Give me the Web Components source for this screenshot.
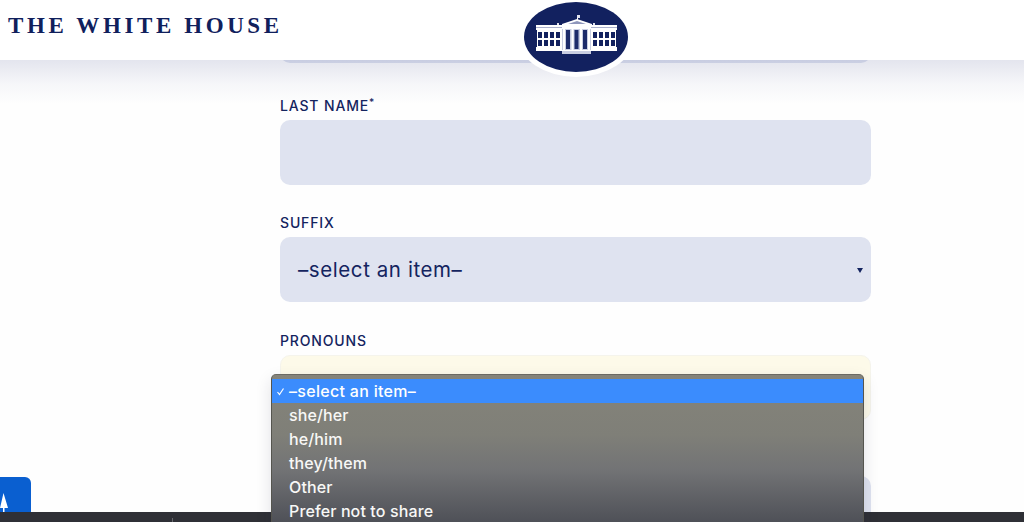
<!DOCTYPE html>
<html>
<head>
<meta charset="utf-8">
<title>The White House</title>
<style>
    html, body { margin: 0; height: 522px; overflow: hidden; background: #fefefe; }
</style>
</head>
<body>
<page-shell>
    <site-header slot="header">THE WHITE HOUSE</site-header>
    <form-field slot="form" class="first" variant="blank"></form-field>
    <form-field slot="form" label="LAST NAME" required variant="blank"></form-field>
    <form-field slot="form" label="SUFFIX" variant="select">–select an item–</form-field>
    <form-field slot="form" label="PRONOUNS" variant="focus"></form-field>
    <form-field slot="form" class="last" variant="blank"></form-field>
    <help-badge slot="overlay"></help-badge>
    <bottom-bar slot="overlay"></bottom-bar>
    <option-menu slot="overlay">
        <option-row selected>–select an item–</option-row>
        <option-row>she/her</option-row>
        <option-row>he/him</option-row>
        <option-row>they/them</option-row>
        <option-row>Other</option-row>
        <option-row>Prefer not to share</option-row>
    </option-menu>
</page-shell>

<script>
class PageShell extends HTMLElement {
    constructor() {
        super();
        const shadow = this.attachShadow({ mode: 'open' });
        shadow.innerHTML = `
        <style>
            :host { display: block; position: relative; height: 522px; overflow: hidden; }
            main {
                display: flex;
                flex-direction: column;
                width: 591px;
                margin-top: -3.4px;
                margin-left: 280px;
            }
        </style>
        <slot name="header"></slot>
        <main><slot name="form"></slot></main>
        <slot name="overlay"></slot>
        `;
    }
}

class SiteHeader extends HTMLElement {
    constructor() {
        super();
        const shadow = this.attachShadow({ mode: 'open' });
        shadow.innerHTML = `
        <style>
            :host {
                display: flex;
                align-items: flex-start;
                position: absolute;
                top: 0;
                left: 0;
                right: 0;
                height: 60px;
                padding-left: 8px;
                box-sizing: border-box;
                background: #fff;
                z-index: 2;
            }
            :host::after {
                content: '';
                position: absolute;
                top: 60px;
                left: 0;
                right: 0;
                height: 44px;
                background: linear-gradient(rgba(50, 60, 130, .13), rgba(50, 60, 130, .04) 55%, rgba(50, 60, 130, 0));
            }
            .title {
                margin-top: 14px;
                font: bold 23px/24px "Liberation Serif", serif;
                letter-spacing: 3.6px;
                white-space: nowrap;
                color: #10205c;
            }
            svg { position: absolute; left: 518px; top: 0; z-index: 1; }
        </style>
        <span class="title"><slot></slot></span>
        <svg width="116" height="80" viewBox="518 0 116 80">
            <ellipse cx="576" cy="39" rx="57" ry="38" fill="#fff"/>
            <ellipse cx="576" cy="37" rx="52" ry="35" fill="#12215f"/>
            <!-- flag and pediment -->
            <rect x="577" y="15" width="1" height="5" fill="#fff"/>
            <rect x="577" y="15" width="3" height="3" fill="#dfe2ee"/>
            <path d="M562 24 L577 19 L592 24 L592 26 L562 26 Z" fill="#fff"/>
            <path d="M568 24 L577 21 L586 24 Z" fill="#8f97bb"/>
            <rect x="557" y="23" width="2" height="2" fill="#dfe2ee"/>
            <rect x="593" y="23" width="2" height="2" fill="#dfe2ee"/>
            <!-- wings -->
            <rect x="536" y="25" width="81" height="5" fill="#fff"/>
            <rect x="536" y="27" width="81" height="1" fill="#aab0cc"/>
            <rect x="537" y="30" width="26" height="17" fill="#fff"/>
            <rect x="591" y="30" width="25" height="17" fill="#fff"/>
            <rect x="536" y="47" width="81" height="4" fill="#fff"/>
            <g fill="#12215f">
                <rect x="538" y="32" width="4" height="6"/><rect x="544" y="32" width="4" height="6"/><rect x="550" y="32" width="4" height="6"/><rect x="556" y="32" width="4" height="6"/>
                <rect x="538" y="40" width="4" height="6"/><rect x="544" y="40" width="4" height="6"/><rect x="550" y="40" width="4" height="6"/><rect x="556" y="40" width="4" height="6"/>
                <rect x="593" y="32" width="4" height="6"/><rect x="599" y="32" width="4" height="6"/><rect x="605" y="32" width="4" height="6"/><rect x="611" y="32" width="4" height="6"/>
                <rect x="593" y="40" width="4" height="6"/><rect x="599" y="40" width="4" height="6"/><rect x="605" y="40" width="4" height="6"/><rect x="611" y="40" width="4" height="6"/>
            </g>
            <!-- portico -->
            <rect x="562" y="28" width="29" height="26" fill="#c9cee2"/>
            <rect x="566" y="30" width="4" height="19" fill="#1d2c6a"/>
            <rect x="574.5" y="30" width="4" height="19" fill="#1d2c6a"/>
            <rect x="583" y="30" width="4" height="19" fill="#1d2c6a"/>
            <rect x="562" y="26" width="29" height="3" fill="#fff"/>
            <rect x="563" y="29" width="2" height="21" fill="#fff"/>
            <rect x="571.5" y="29" width="2" height="21" fill="#fff"/>
            <rect x="580" y="29" width="2" height="21" fill="#fff"/>
            <rect x="588" y="29" width="2" height="21" fill="#fff"/>
            <rect x="562" y="50" width="29" height="1" fill="#fff"/>
        </svg>
        `;
    }
}

class FormField extends HTMLElement {
    constructor() {
        super();
        const shadow = this.attachShadow({ mode: 'open' });
        const label = this.getAttribute('label');
        const variant = this.getAttribute('variant');
        const star = this.hasAttribute('required') ? '<sup>*</sup>' : '';
        const arrow = variant === 'select'
            ? '<svg width="6" height="5" viewBox="0 0 6 5"><path d="M0 0H6L3 5Z" fill="#14245f"/></svg>'
            : '';
        shadow.innerHTML = `
        <style>
            :host {
                display: flex;
                flex-direction: column;
                flex: none;
                height: 117.5px;
                box-sizing: border-box;
                padding-top: 20px;
            }
            :host(.first) { height: 66px; padding-top: 0; margin-bottom: 13px; }
            :host(.first) .control { height: 66px; }
            :host(.last) { padding-top: 48px; }
            label {
                height: 20px;
                margin-bottom: 4px;
                font: 500 14px/20px Inter, sans-serif;
                letter-spacing: .85px;
                color: #14245f;
            }
            sup { font-size: 10px; line-height: 0; vertical-align: 5px; }
            .control {
                display: flex;
                align-items: center;
                justify-content: space-between;
                height: 65px;
                flex: none;
                box-sizing: border-box;
                padding: 1px 8px 0 18px;
                border-radius: 10px;
                background: #dfe3f0;
                font: 400 20.5px/24px Inter, sans-serif;
                letter-spacing: .58px;
                color: #14245f;
            }
            :host([variant="focus"]) .control {
                background: #fdfae9;
                border: 1px solid #f5f4ec;
            }
            svg { flex: none; }
        </style>
        ${label ? `<label>${label}${star}</label>` : ''}
        <div class="control"><span><slot></slot></span>${arrow}</div>
        `;
    }
}

class OptionMenu extends HTMLElement {
    constructor() {
        super();
        const shadow = this.attachShadow({ mode: 'open' });
        shadow.innerHTML = `
        <style>
            :host {
                display: flex;
                flex-direction: column;
                position: absolute;
                left: 271px;
                top: 374px;
                width: 593px;
                height: 170px;
                box-sizing: border-box;
                padding-top: 4px;
                border: 1px solid #55554f;
                border-bottom: 0;
                border-top-color: #6b6a63;
                border-radius: 5px 5px 0 0;
                background: linear-gradient(#85847a 0, #7f7f78 60px, #727375 95px, #4e5057 148px);
                box-shadow: 0 6px 16px rgba(30, 32, 60, .13);
                z-index: 3;
            }
        </style>
        <slot></slot>
        `;
    }
}

class OptionRow extends HTMLElement {
    constructor() {
        super();
        const shadow = this.attachShadow({ mode: 'open' });
        const check = this.hasAttribute('selected')
            ? '<svg width="9" height="9" viewBox="0 0 9 9"><path d="M1.5 5 L3.5 7.5 L7.5 1.5" fill="none" stroke="#fff" stroke-width="1.2"/></svg>'
            : '';
        shadow.innerHTML = `
        <style>
            :host {
                display: flex;
                align-items: center;
                flex: none;
                height: 24px;
                font: 500 16px/24px Inter, sans-serif;
                letter-spacing: .12px;
                color: #f8f8f6;
            }
            :host([selected]) { background: #3b8cfd; color: #fff; letter-spacing: .3px; }
            .mark { display: flex; flex: none; width: 17px; padding-left: 4px; box-sizing: border-box; }
        </style>
        <span class="mark">${check}</span><slot></slot>
        `;
    }
}

class HelpBadge extends HTMLElement {
    constructor() {
        super();
        const shadow = this.attachShadow({ mode: 'open' });
        shadow.innerHTML = `
        <style>
            :host {
                position: absolute;
                left: 0;
                top: 477px;
                width: 31px;
                height: 35px;
                border-radius: 0 6px 0 0;
                background: #0a5fd0;
            }
            svg { position: absolute; left: 0; top: 16px; }
        </style>
        <svg width="9" height="19" viewBox="0 0 9 19"><path d="M3.5 0 L8 15 L4.5 15 L4.5 19 L3 19 L3 15 L0 15 Z" fill="#fff"/></svg>
        `;
    }
}

class BottomBar extends HTMLElement {
    constructor() {
        super();
        const shadow = this.attachShadow({ mode: 'open' });
        shadow.innerHTML = `
        <style>
            :host {
                position: absolute;
                left: 0;
                right: 0;
                bottom: 0;
                height: 10px;
                background: #2f3036;
            }
            i { position: absolute; left: 172px; top: 6px; width: 1px; height: 4px; background: #66676c; }
        </style>
        <i></i>
        `;
    }
}

customElements.define('page-shell', PageShell);
customElements.define('site-header', SiteHeader);
customElements.define('form-field', FormField);
customElements.define('option-menu', OptionMenu);
customElements.define('option-row', OptionRow);
customElements.define('help-badge', HelpBadge);
customElements.define('bottom-bar', BottomBar);
</script>
</body>
</html>
